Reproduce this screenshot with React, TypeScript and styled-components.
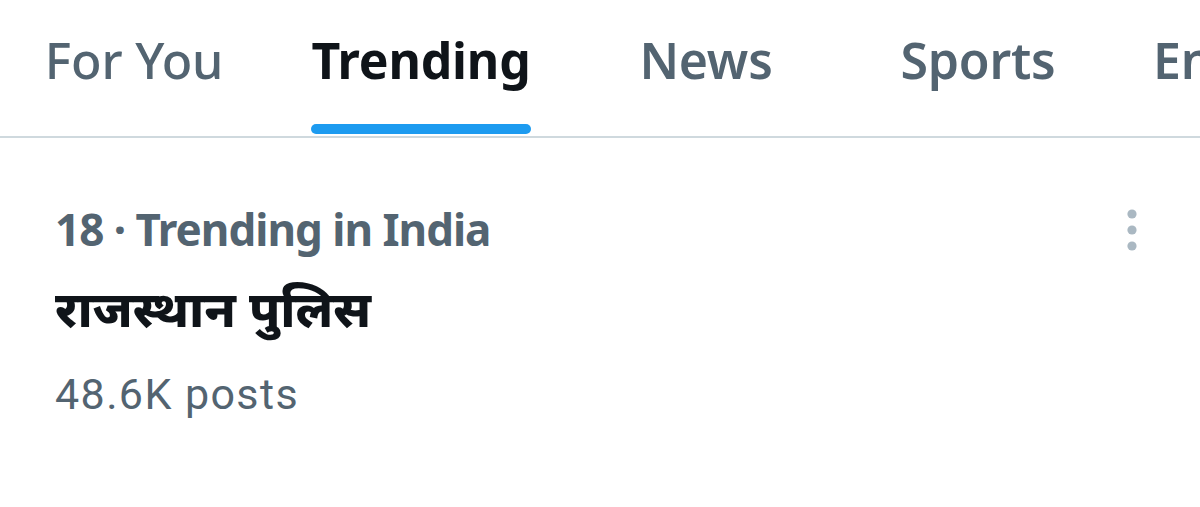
import React from "react";
import styled, { createGlobalStyle } from "styled-components";

const GlobalStyle = createGlobalStyle`
  html, body { margin: 0; padding: 0; background: #ffffff; }
  body { width: 1200px; height: 507px; overflow: hidden; font-family: "Noto Sans", "Open Sans", sans-serif; }
`;

const Page = styled.div`
  width: 1200px;
  height: 507px;
  background: #ffffff;
  display: flex;
  flex-direction: column;
`;

const TabBar = styled.nav`
  display: flex;
  height: 136px;
  border-bottom: 2px solid #cfd9de;
  overflow: hidden;
  white-space: nowrap;
`;

const Tab = styled.div<{ $w: number; $align?: string; $pad?: number }>`
  flex: 0 0 ${(p) => p.$w}px;
  display: flex;
  justify-content: ${(p) => p.$align || "center"};
  padding-left: ${(p) => p.$pad || 0}px;
  box-sizing: border-box;
`;

const TabInner = styled.div`
  display: flex;
  flex-direction: column;
  justify-content: space-between;
  padding-top: 35px;
  padding-bottom: 2px;
`;

const TabLabel = styled.span<{ $active?: boolean; $weight: number }>`
  font-family: "Noto Sans", "Open Sans", sans-serif;
  font-size: 50px;
  line-height: 50px;
  font-weight: ${(p) => p.$weight};
  color: ${(p) => (p.$active ? "#0f1419" : "#536471")};
  letter-spacing: -0.2px;
`;

const Indicator = styled.div<{ $active?: boolean }>`
  height: 10px;
  border-radius: 5px;
  background: ${(p) => (p.$active ? "#1d9bf0" : "transparent")};
`;

const TrendRow = styled.div`
  display: flex;
  justify-content: space-between;
  padding: 0 56px 0 55px;
`;

const TrendBody = styled.div`
  display: flex;
  flex-direction: column;
`;

const Meta = styled.div`
  font-family: "Noto Sans", sans-serif;
  font-weight: 700;
  font-size: 44px;
  line-height: 44px;
  color: #536471;
  margin-top: 69px;
  letter-spacing: -1px;
`;

const Headline = styled.div`
  font-family: "Noto Sans", "Noto Sans Devanagari", sans-serif;
  font-weight: 800;
  font-size: 50px;
  line-height: 50px;
  color: #0f1419;
  margin-top: 32px;
`;

const Posts = styled.div`
  font-family: Roboto, "Noto Sans", sans-serif;
  font-weight: 400;
  font-size: 43px;
  line-height: 43px;
  color: #536471;
  margin-top: 40px;
  letter-spacing: 1.4px;
`;

const MoreButton = styled.button`
  border: none;
  background: none;
  padding: 0;
  margin-top: 70px;
  width: 24px;
  height: 48px;
  display: flex;
  align-items: flex-start;
  justify-content: center;
`;

const tabs = [
  { label: "For You", w: 268, weight: 500 },
  { label: "Trending", w: 306, active: true, weight: 700 },
  { label: "News", w: 264, weight: 600 },
  { label: "Sports", w: 280, weight: 600 },
  { label: "Entertainment", w: 400, align: "flex-start", pad: 35, weight: 600 },
];

export default function App() {
  return (
    <>
      <GlobalStyle />
      <Page>
        <TabBar>
          {tabs.map((t) => (
            <Tab key={t.label} $w={t.w} $align={t.align} $pad={t.pad}>
              <TabInner>
                <TabLabel $active={t.active} $weight={t.weight}>
                  {t.label}
                </TabLabel>
                <Indicator $active={t.active} />
              </TabInner>
            </Tab>
          ))}
        </TabBar>
        <TrendRow>
          <TrendBody>
            <Meta>18 · Trending in India</Meta>
            <Headline>राजस्थान पुलिस</Headline>
            <Posts>48.6K posts</Posts>
          </TrendBody>
          <MoreButton aria-label="More">
            <svg width="12" height="44" viewBox="0 0 12 44">
              <circle cx="6" cy="6" r="4.6" fill="#aab8c2" />
              <circle cx="6" cy="22" r="4.6" fill="#aab8c2" />
              <circle cx="6" cy="38" r="4.6" fill="#aab8c2" />
            </svg>
          </MoreButton>
        </TrendRow>
      </Page>
    </>
  );
}
